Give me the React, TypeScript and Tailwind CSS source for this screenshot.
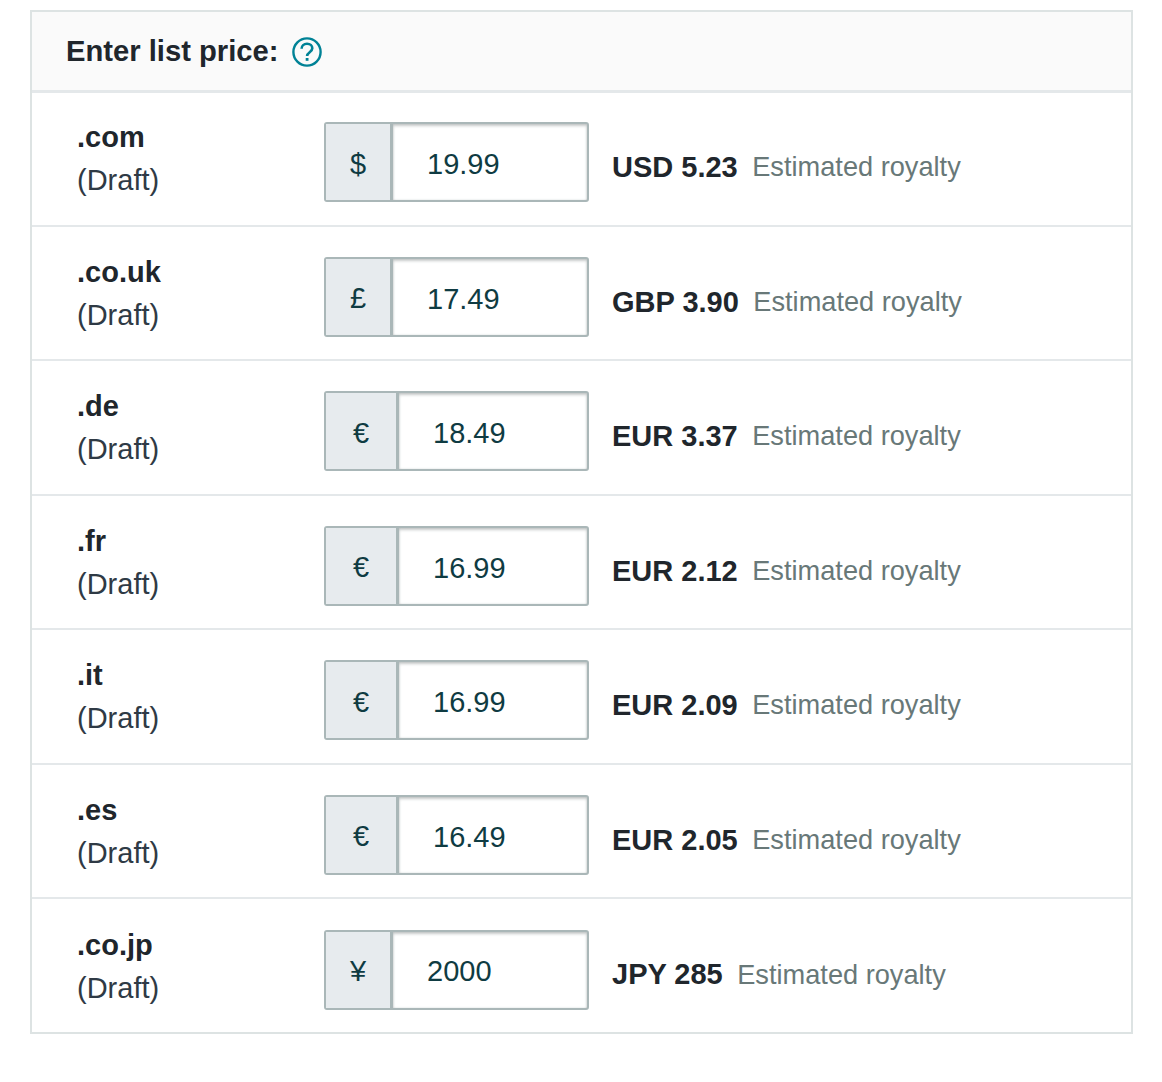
const rows = [
  { site: ".com", symbol: "$", price: "19.99", royalty: "USD 5.23", wide: false },
  { site: ".co.uk", symbol: "£", price: "17.49", royalty: "GBP 3.90", wide: false },
  { site: ".de", symbol: "€", price: "18.49", royalty: "EUR 3.37", wide: true },
  { site: ".fr", symbol: "€", price: "16.99", royalty: "EUR 2.12", wide: true },
  { site: ".it", symbol: "€", price: "16.99", royalty: "EUR 2.09", wide: true },
  { site: ".es", symbol: "€", price: "16.49", royalty: "EUR 2.05", wide: true },
  { site: ".co.jp", symbol: "¥", price: "2000", royalty: "JPY 285", wide: false },
];

function HelpIcon() {
  return (
    <svg width="30" height="30" viewBox="0 0 30 30" fill="none" className="ml-[14px]">
      <circle cx="15" cy="15" r="13.6" stroke="#008296" strokeWidth="2.4" />
      <path
        d="M9.6 11.8c0-3.2 2.3-5 5.4-5 3.1 0 5.3 1.8 5.3 4.5 0 3.9-5.2 3.9-5.2 7.7"
        stroke="#008296"
        strokeWidth="2.6"
      />
      <rect x="13.7" y="21" width="2.8" height="2.8" fill="#008296" />
    </svg>
  );
}

export default function App() {
  return (
    <div className="bg-white h-[1082px] pt-[10px] pl-[30px] pr-[29px] font-['Liberation_Sans',Arial,sans-serif]">
      <div className="border-2 border-[#dde3e3]">
        <div className="flex items-center h-[77px] pl-[34px] pt-[1px] bg-[#fafafa] border-b-[3px] border-[#e4e8ea] box-content -mb-px">
          <span className="text-[29.2px] font-bold text-[#20262c]">Enter list price:</span>
          <HelpIcon />
        </div>
        {rows.map((row, i) => (
          <div
            key={row.site}
            className={`flex items-center pl-[45px] ${i < rows.length - 1 ? "h-[134.5px] border-b-2 border-[#e4e8ea]" : "h-[133px]"}`}
          >
            <div className="w-[247px] text-[29px] leading-[43px] text-[#20262c] mt-[2px]">
              <div className="font-bold">{row.site}</div>
              <div className="text-[#2f3a45]">(Draft)</div>
            </div>
            <div className="flex w-[265px] h-[80px] border-2 border-[#aab7b8] rounded-[3px] mt-[8px] overflow-hidden">
              <div
                className={`flex items-center justify-center shrink-0 pt-[4px] bg-[#e7ebee] border-r-[3px] border-[#aab7b8] text-[29px] text-[#0f3b42] ${row.wide ? "w-[73px]" : "w-[67px]"}`}
              >
                {row.symbol}
              </div>
              <div className="flex-1 flex items-center pl-[34px] pt-[5px] text-[29px] text-[#0f3b42] shadow-[inset_0_2px_3px_rgba(120,130,130,0.4),inset_0_0_2px_rgba(120,130,130,0.3)]">
                {row.price}
              </div>
            </div>
            <div className="flex items-center ml-[23px] mt-[19px] text-[29px]">
              <span className="font-bold text-[#20262c]">{row.royalty}</span>
              <span className="ml-[14.5px] text-[#687878] text-[27.2px]">Estimated royalty</span>
            </div>
          </div>
        ))}
      </div>
    </div>
  );
}
